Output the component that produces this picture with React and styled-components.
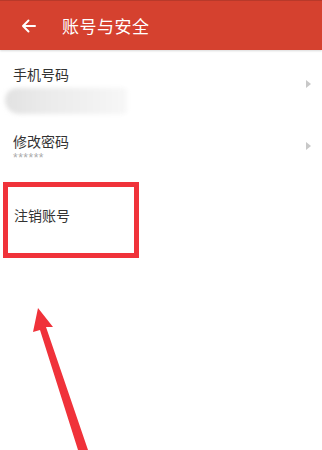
import React from "react";
import styled, { createGlobalStyle } from "styled-components";

const Global = createGlobalStyle`
  body {
    margin: 0;
    background: #fff;
    font-family: "Noto Sans CJK SC", "Noto Sans", sans-serif;
  }
`;

const Page = styled.div`
  position: relative;
  width: 322px;
  height: 450px;
  overflow: hidden;
  background: #fff;
`;

const Header = styled.div`
  height: 50px;
  display: flex;
  align-items: center;
  background: #d5412f;
  border-top: 1px solid #b8392a;
  box-sizing: border-box;
  box-shadow: 0 1px 2px rgba(0, 0, 0, 0.15);
  color: #fff;
`;

const Back = styled.div`
  width: 62px;
  display: flex;
  justify-content: center;
  padding-right: 4px;
  box-sizing: border-box;
`;

const Title = styled.div`
  font-size: 17px;
  letter-spacing: 0.5px;
`;

const Row = styled.div`
  display: flex;
  align-items: flex-start;
  justify-content: space-between;
  padding: ${(p) => p.$pad};
  height: ${(p) => p.$h}px;
  box-sizing: border-box;
`;

const Label = styled.div`
  font-size: 14px;
  color: #333;
  line-height: 18px;
`;

const Sub = styled.div`
  font-family: "Liberation Sans", sans-serif;
  font-size: 12px;
  letter-spacing: 0.5px;
  color: #aaa;
  line-height: 10px;
  margin-top: 3px;
`;

const Blur = styled.div`
  margin: 5px 0 0 -8px;
  width: 122px;
  height: 26px;
  border-radius: 12px 4px 4px 14px;
  background: linear-gradient(90deg, #e2e2e2 0%, #ebebeb 35%, #f1f1f1 70%, #f7f7f7 100%);
  filter: blur(2px);
`;

const Caret = styled.div`
  width: 0;
  height: 0;
  margin-top: ${(p) => p.$top}px;
  margin-right: 11px;
  border-top: 4px solid transparent;
  border-bottom: 4px solid transparent;
  border-left: 5px solid #c8c8c8;
`;

const Highlight = styled.div`
  margin: 6px 0 0 3px;
  width: 136px;
  height: 76px;
  border: 5px solid #f0323a;
  box-sizing: border-box;
  display: flex;
  align-items: center;
  padding-left: 6px;
  padding-bottom: 10px;
`;

const Annotation = styled.svg`
  position: absolute;
  left: 0;
  top: 290px;
`;

export default function App() {
  return (
    <Page>
      <Global />
      <Header>
        <Back>
          <svg width="16" height="16" viewBox="0 0 16 16" fill="none" stroke="#fff" strokeWidth="2" strokeLinecap="round" strokeLinejoin="round">
            <path d="M14 8H2M7.5 2.5L2 8l5.5 5.5" />
          </svg>
        </Back>
        <Title>账号与安全</Title>
      </Header>
      <Row $h={68} $pad="15px 0 0 13px">
        <div>
          <Label>手机号码</Label>
          <Blur />
        </div>
        <Caret $top={15} />
      </Row>
      <Row $h={58} $pad="14px 0 0 13px">
        <div>
          <Label>修改密码</Label>
          <Sub>******</Sub>
        </div>
        <Caret $top={10} />
      </Row>
      <Highlight>
        <Label>注销账号</Label>
      </Highlight>
      <Annotation width="120" height="160" viewBox="0 0 120 160">
        <polygon points="38,18 53,37 46,37 88,160 78,160 40,40 33,42" fill="#f0323a" />
      </Annotation>
    </Page>
  );
}
